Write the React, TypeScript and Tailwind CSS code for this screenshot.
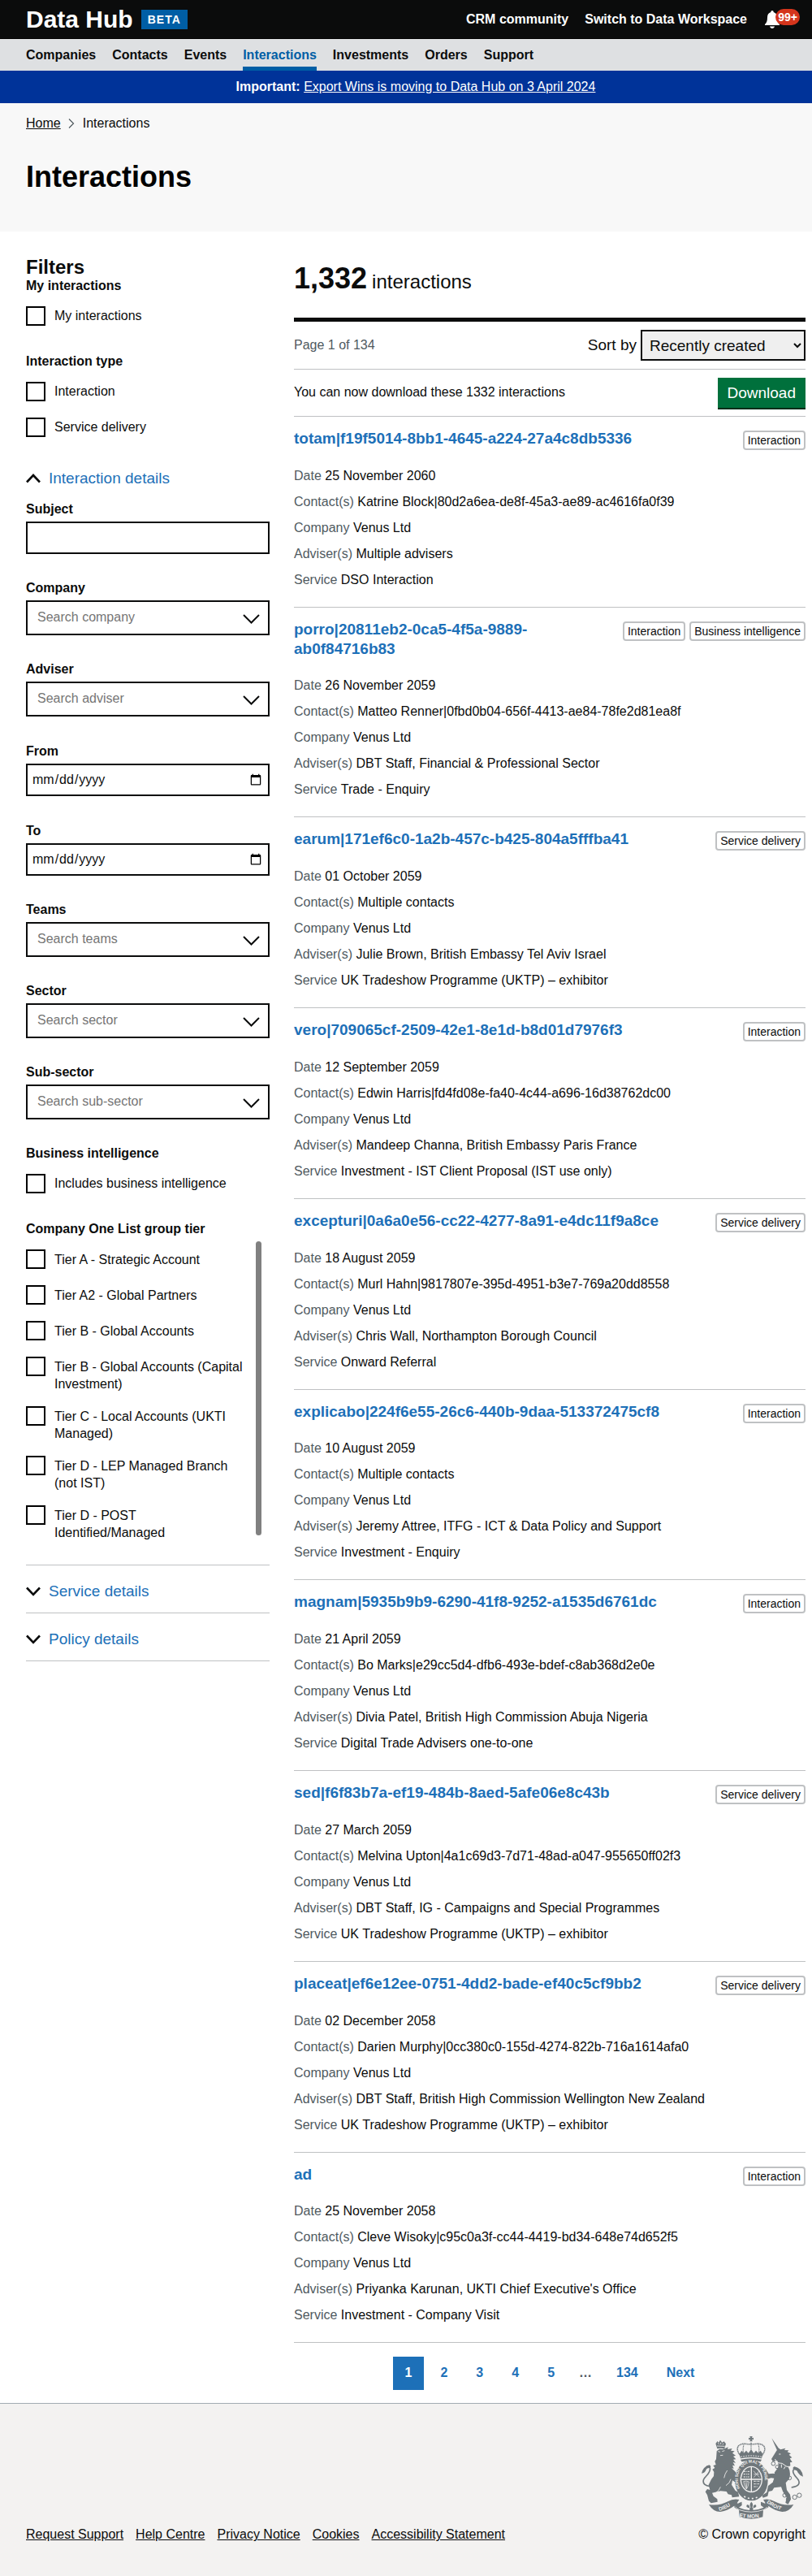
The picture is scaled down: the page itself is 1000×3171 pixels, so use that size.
import React from 'react';

const NAV = ['Companies', 'Contacts', 'Events', 'Interactions', 'Investments', 'Orders', 'Support'];

const TIERS = [
  'Tier A - Strategic Account',
  'Tier A2 - Global Partners',
  'Tier B - Global Accounts',
  'Tier B - Global Accounts (Capital Investment)',
  'Tier C - Local Accounts (UKTI Managed)',
  'Tier D - LEP Managed Branch (not IST)',
  'Tier D - POST Identified/Managed',
];

type Item = { title: string; tags: string[]; date: string; contact: string; adviser: string; service: string };

const ITEMS: Item[] = [
  {
    title: 'totam|f19f5014-8bb1-4645-a224-27a4c8db5336',
    tags: ['Interaction'],
    date: '25 November 2060',
    contact: 'Katrine Block|80d2a6ea-de8f-45a3-ae89-ac4616fa0f39',
    adviser: 'Multiple advisers',
    service: 'DSO Interaction',
  },
  {
    title: 'porro|20811eb2-0ca5-4f5a-9889-ab0f84716b83',
    tags: ['Interaction', 'Business intelligence'],
    date: '26 November 2059',
    contact: 'Matteo Renner|0fbd0b04-656f-4413-ae84-78fe2d81ea8f',
    adviser: 'DBT Staff, Financial & Professional Sector',
    service: 'Trade - Enquiry',
  },
  {
    title: 'earum|171ef6c0-1a2b-457c-b425-804a5fffba41',
    tags: ['Service delivery'],
    date: '01 October 2059',
    contact: 'Multiple contacts',
    adviser: 'Julie Brown, British Embassy Tel Aviv Israel',
    service: 'UK Tradeshow Programme (UKTP) – exhibitor',
  },
  {
    title: 'vero|709065cf-2509-42e1-8e1d-b8d01d7976f3',
    tags: ['Interaction'],
    date: '12 September 2059',
    contact: 'Edwin Harris|fd4fd08e-fa40-4c44-a696-16d38762dc00',
    adviser: 'Mandeep Channa, British Embassy Paris France',
    service: 'Investment - IST Client Proposal (IST use only)',
  },
  {
    title: 'excepturi|0a6a0e56-cc22-4277-8a91-e4dc11f9a8ce',
    tags: ['Service delivery'],
    date: '18 August 2059',
    contact: 'Murl Hahn|9817807e-395d-4951-b3e7-769a20dd8558',
    adviser: 'Chris Wall, Northampton Borough Council',
    service: 'Onward Referral',
  },
  {
    title: 'explicabo|224f6e55-26c6-440b-9daa-513372475cf8',
    tags: ['Interaction'],
    date: '10 August 2059',
    contact: 'Multiple contacts',
    adviser: 'Jeremy Attree, ITFG - ICT & Data Policy and Support',
    service: 'Investment - Enquiry',
  },
  {
    title: 'magnam|5935b9b9-6290-41f8-9252-a1535d6761dc',
    tags: ['Interaction'],
    date: '21 April 2059',
    contact: 'Bo Marks|e29cc5d4-dfb6-493e-bdef-c8ab368d2e0e',
    adviser: 'Divia Patel, British High Commission Abuja Nigeria',
    service: 'Digital Trade Advisers one-to-one',
  },
  {
    title: 'sed|f6f83b7a-ef19-484b-8aed-5afe06e8c43b',
    tags: ['Service delivery'],
    date: '27 March 2059',
    contact: 'Melvina Upton|4a1c69d3-7d71-48ad-a047-955650ff02f3',
    adviser: 'DBT Staff, IG - Campaigns and Special Programmes',
    service: 'UK Tradeshow Programme (UKTP) – exhibitor',
  },
  {
    title: 'placeat|ef6e12ee-0751-4dd2-bade-ef40c5cf9bb2',
    tags: ['Service delivery'],
    date: '02 December 2058',
    contact: 'Darien Murphy|0cc380c0-155d-4274-822b-716a1614afa0',
    adviser: 'DBT Staff, British High Commission Wellington New Zealand',
    service: 'UK Tradeshow Programme (UKTP) – exhibitor',
  },
  {
    title: 'ad',
    tags: ['Interaction'],
    date: '25 November 2058',
    contact: 'Cleve Wisoky|c95c0a3f-cc44-4419-bd34-648e74d652f5',
    adviser: "Priyanka Karunan, UKTI Chief Executive's Office",
    service: 'Investment - Company Visit',
  },
];

const FOOTER_LINKS = ['Request Support', 'Help Centre', 'Privacy Notice', 'Cookies', 'Accessibility Statement'];

function Chevron({ up = false }: { up?: boolean }) {
  return (
    <svg width="18" height="12" viewBox="0 0 18 12" fill="none" stroke="#0b0c0c" strokeWidth="2.6" aria-hidden="true">
      <path d={up ? 'M1 10.5 9 2l8 8.5' : 'M1 1.5 9 9.8l8-8.3'} />
    </svg>
  );
}

function Check({ label }: { label: string }) {
  return (
    <label className="flex items-center gap-[11px]">
      <input type="checkbox" className="size-6 shrink-0 appearance-none border-2 border-black bg-white" />
      {label}
    </label>
  );
}

function CheckGroup({ legend, options }: { legend: string; options: string[] }) {
  return (
    <fieldset>
      <legend className="mb-[15px] font-bold">{legend}</legend>
      <div className="flex flex-col gap-5">
        {options.map((o) => (
          <Check key={o} label={o} />
        ))}
      </div>
    </fieldset>
  );
}

function Typeahead({ label, placeholder }: { label: string; placeholder: string }) {
  const id = 'filter-' + label.toLowerCase();
  return (
    <div>
      <label htmlFor={id} className="mb-[5px] block font-bold">
        {label}
      </label>
      <div className="relative">
        <input
          id={id}
          type="text"
          placeholder={placeholder}
          className="block h-[43px] w-full border-2 border-[#0b0c0c] bg-white pr-10 pb-0.5 pl-3 placeholder:text-[#757575]"
        />
        <svg
          className="pointer-events-none absolute top-[17px] right-3 h-3 w-[21px]"
          viewBox="0 0 21 12"
          fill="none"
          stroke="#0b0c0c"
          strokeWidth="2"
          aria-hidden="true"
        >
          <path d="M1 1l9.5 9.5L20 1" />
        </svg>
      </div>
    </div>
  );
}

function DateField({ label }: { label: string }) {
  const id = 'filter-' + label.toLowerCase();
  return (
    <div className="pt-px">
      <label htmlFor={id} className="mb-[5px] block font-bold">
        {label}
      </label>
      <input id={id} type="date" className="block h-10 w-full border-2 border-[#0b0c0c] bg-white p-[5px]" />
    </div>
  );
}

function Toggle({ label }: { label: string }) {
  return (
    <div className="border-t border-[#bfc1c3] pt-[19px] pb-3.5">
      <button type="button" className="flex items-center gap-2.5 text-[19px] leading-[25px] text-[#1d70b8]">
        <Chevron />
        {label}
      </button>
    </div>
  );
}

function Filters() {
  return (
    <form className="w-[300px] shrink-0 pt-[30px]">
      <h2 className="text-2xl leading-[27px] font-bold">Filters</h2>
      <div className="flex flex-col gap-[34px]">
        <CheckGroup legend="My interactions" options={['My interactions']} />
        <CheckGroup legend="Interaction type" options={['Interaction', 'Service delivery']} />
      </div>
      <button
        type="button"
        className="mt-[38px] mb-4 flex items-center gap-2.5 text-[19px] leading-[25px] text-[#1d70b8]"
      >
        <Chevron up />
        Interaction details
      </button>
      <div className="flex flex-col gap-8">
        <div>
          <label htmlFor="filter-subject" className="mb-[5px] block font-bold">
            Subject
          </label>
          <input
            id="filter-subject"
            type="text"
            className="block h-10 w-full border-2 border-[#0b0c0c] bg-white px-[5px]"
          />
        </div>
        <Typeahead label="Company" placeholder="Search company" />
        <Typeahead label="Adviser" placeholder="Search adviser" />
        <DateField label="From" />
        <DateField label="To" />
        <Typeahead label="Teams" placeholder="Search teams" />
        <Typeahead label="Sector" placeholder="Search sector" />
        <Typeahead label="Sub-sector" placeholder="Search sub-sector" />
        <CheckGroup legend="Business intelligence" options={['Includes business intelligence']} />
      </div>
      <fieldset className="mt-[34px]">
        <legend className="mb-[5px] font-bold">Company One List group tier</legend>
        <div className="mb-7 flex h-[370px] overflow-hidden pr-2.5">
          <ul className="flex-1 pt-2.5">
            {TIERS.map((t) => (
              <li key={t} className="min-h-11 pr-[15px] pb-[17px]">
                <label className="flex items-start gap-[11px]">
                  <input type="checkbox" className="size-6 shrink-0 appearance-none border-2 border-black bg-white" />
                  <span className="pt-0.5 leading-[21px]">{t}</span>
                </label>
              </li>
            ))}
          </ul>
          <div className="h-[362px] w-[7px] rounded-full bg-[#808080]" aria-hidden="true" />
        </div>
      </fieldset>
      <div className="border-b border-[#bfc1c3]">
        <Toggle label="Service details" />
        <Toggle label="Policy details" />
      </div>
    </form>
  );
}

function Row({ name, value }: { name: string; value: string }) {
  return (
    <div>
      <dt className="inline text-[#505a5f]">{name}</dt> <dd className="inline">{value}</dd>
    </div>
  );
}

function InteractionItem({ item }: { item: Item }) {
  return (
    <li className="border-t border-[#bfc1c3] pt-[15px] pb-[23px]">
      <div className="mb-6 flex items-start justify-between">
        <h3 className="text-[19px] leading-tight font-bold">
          <a href="#" className="text-[#1d70b8]">
            {item.title}
          </a>
        </h3>
        <div className="mt-0.5 -mb-1 flex shrink-0 gap-[5px] pl-4">
          {item.tags.map((t) => (
            <span
              key={t}
              className="rounded-sm border-2 border-[#bfc1c3] px-1 text-sm leading-5 whitespace-nowrap"
            >
              {t}
            </span>
          ))}
        </div>
      </div>
      <dl className="flex flex-col gap-3">
        <Row name="Date" value={item.date} />
        <Row name="Contact(s)" value={item.contact} />
        <Row name="Company" value="Venus Ltd" />
        <Row name="Adviser(s)" value={item.adviser} />
        <Row name="Service" value={item.service} />
      </dl>
    </li>
  );
}

function Pagination() {
  return (
    <nav aria-label="Pagination" className="mt-[17px] mb-4 flex justify-center gap-[5px] font-bold text-[#1d70b8]">
      <a href="#" aria-current="page" className="bg-[#1d70b8] px-[15px] pt-2.5 pb-[11px] text-white">
        1
      </a>
      {['2', '3', '4', '5'].map((p) => (
        <a key={p} href="#" className="px-[15px] pt-2.5 pb-[11px]">
          {p}
        </a>
      ))}
      <span className="px-2.5 pt-2.5 pb-[11px] text-[#505a5f]">…</span>
      <a href="#" className="px-[15px] pt-2.5 pb-[11px]">
        134
      </a>
      <a href="#" className="px-[15px] pt-2.5 pb-[11px]">
        Next
      </a>
    </nav>
  );
}

function Results() {
  return (
    <section className="min-w-0 flex-1 pt-[38px]">
      <h2 className="mb-6 flex items-baseline gap-1.5 text-2xl leading-10">
        <span className="text-4xl leading-10 font-bold">1,332</span>
        interactions
      </h2>
      <div className="flex items-center justify-between border-t-5 border-[#0b0c0c] py-2.5">
        <p className="text-[#505a5f]">Page 1 of 134</p>
        <div className="flex items-center gap-[5px] text-[19px]">
          <label htmlFor="sort">Sort by</label>
          <select id="sort" className="h-[38px] w-[203px] border-2 border-[#0b0c0c] bg-[#efefef] px-[5px]">
            <option>Recently created</option>
          </select>
        </div>
      </div>
      <div className="flex items-start justify-between border-t border-[#bfc1c3] pt-2.5 pb-2">
        <p className="pt-2">You can now download these 1332 interactions</p>
        <button
          type="button"
          className="h-[39px] border-b-2 border-[#002d18] bg-[#00703c] px-3 text-[19px] text-white"
        >
          Download
        </button>
      </div>
      <ul className="border-b border-[#bfc1c3]">
        {ITEMS.map((i) => (
          <InteractionItem key={i.title} item={i} />
        ))}
      </ul>
      <Pagination />
    </section>
  );
}

function Crest() {
  return (
    <svg width="125" height="102" viewBox="72 57 375 306" role="img" aria-label="Royal coat of arms" fill="#6f777b">
      {/* lion */}
      <path d="M124 84l7-9 4 6 6-10 7 9 7-4 7 9-6 19q-13-5-26-1z" />
      <path d="M129 93l29 1M133 82l4 5M143 80v7M153 83l-3 5" stroke="#f3f2f1" strokeWidth="2.5" fill="none" />
      <path d="M128 112l10-8 14 1 18-8-2 8 17-3-5 8 14 2-8 7 12 9-9 3 10 11-10 1 9 12-10-2 7 13-9-2 5 12-8-1 18 17-5 14 8 12-7 9-11-7-3 16 14 22 10 5 4 17-26 3-2-9-13-3-6-10-22-2-31 7 5 12 14 11 1 10-24 5-8-8-6-22-7-12 7-10 10 3-5-19 10-20 9-12 1-15-6-10 9-5-6-9 10-3-4-12 5-9z" />
      <path d="M133 113l8 2M148 113l9-3M141 128l10-1M167 183q-9 12-12 28M122 268q16-10 20-24M180 215q-2 14-18 24" stroke="#f3f2f1" strokeWidth="2.5" fill="none" />
      <path d="M104 242c-18-2-30-10-24-26 7-14 27-24 23-42-2-8-9-8-13-3" fill="none" stroke="#6f777b" strokeWidth="5" />
      <path d="M72 194q6-25 28-31 9 4 4 11-13-2-16 8-4 10-16 12z" />
      {/* unicorn */}
      <path d="M331 64l28 40-8 5z" />
      <path d="M349 110l8-9 7 5 18-5-4 7 16 1-5 6 13 6-7 4 11 11-8 3 9 13-8 2 1 12-8 4q12 22 3 45l-12 14 4 27 12 16 3 17-10 19-10-5 4-20-14-23-6-16-26 3-7 11-13 3-4 17-17 6-4-8 18-12 5-24 17-13 5-15-11-1-18 5 0-13-13-9-8 10-9-3 6-9-12-10 6-10 14 8 14-2 11 18 19-2 18-25-5-22-17 3-5-9z" />
      <path d="M343 141l10 14 16 2 18 12 10 0M350 152l-6 14M367 161v12M381 169l-5 9M358 123h6M329 189l13 5" stroke="#f3f2f1" strokeWidth="3" fill="none" />
      <g fill="none" stroke="#6f777b" strokeWidth="3">
        <circle cx="337" cy="158" r="7" />
        <circle cx="351" cy="170" r="6" />
        <circle cx="397" cy="211" r="7" />
        <circle cx="379" cy="275" r="7" />
        <circle cx="392" cy="290" r="7" />
        <circle cx="416" cy="282" r="8" />
        <circle cx="433" cy="275" r="8" />
      </g>
      <path d="M404 246c24-4 33-12 26-27-7-12-21-20-20-34 1-7 7-9 13-5" fill="none" stroke="#6f777b" strokeWidth="5" />
      <path d="M447 206q-4-32-32-37-9 4-3 11 12 0 16 11 5 9 19 15z" />
      {/* central crown */}
      <path d="M250 57h10l-2 7 6-2v8l-6-2 2 8h-10l2-8-6 2v-8l6 2z" />
      <g fill="none" stroke="#6f777b">
        <path d="M216 129c-20-24-12-42 10-44 12-1 24 4 29 0 5 4 17-1 29 0 22 2 30 20 10 44" strokeWidth="4.5" strokeDasharray="4 1.5" />
        <path d="M255 80v44M228 88q-5 18 0 36M282 88q5 18 0 36" strokeWidth="3.5" strokeDasharray="3 1.5" />
      </g>
      <path d="M212 122l8-12 8 9 9-9 8 9 10-13 10 13 8-9 9 9 8-9 8 12-4 17q-39-8-78 0z" />
      <path d="M217 133q38-8 76 0" stroke="#f3f2f1" strokeWidth="3" strokeDasharray="5 4" fill="none" />
      <path d="M216 143q39-9 78 0l-4 8q-35-7-70 0z" />
      {/* garter and shield */}
      <ellipse cx="256" cy="220" rx="61" ry="75" />
      <ellipse cx="256" cy="216" rx="41" ry="49" fill="#f3f2f1" />
      <ellipse cx="256" cy="216" rx="37" ry="45" />
      <path d="M256 171v90M219 216h74" stroke="#f3f2f1" strokeWidth="4" />
      <path d="M228 187h21M227 197h21M227 207h21M265 223h21M265 233h20M265 243h15" stroke="#f3f2f1" strokeWidth="3" strokeDasharray="7 3 3 2" />
      <path d="M264 185l22 24M285 185l-20 24M265 197h20" stroke="#f3f2f1" strokeWidth="2" />
      <path d="M227 224q10-4 20 1-2 18-9 27-9-10-11-28zM233 226l5 24M240 225l-2 25" fill="none" stroke="#f3f2f1" strokeWidth="2" />
      <path id="garter" d="M214 249A50 61 0 1 1 298 249" fill="none" />
      <text fill="#f3f2f1" fontFamily="Liberation Sans, sans-serif" fontSize="15" fontWeight="bold">
        <textPath href="#garter">HONI SOIT QUI MAL Y PENSE</textPath>
      </text>
      <path d="M229 279q27 16 54 0" stroke="#f3f2f1" strokeWidth="5" strokeDasharray="6 9" fill="none" />
      {/* motto ribbon */}
      <path d="M99 309q38 6 70-11 20-12 42-7l-8 13 17 8-29 3q-21 16-50 21-26 0-42-27z" />
      <path d="M412 309q-38 6-70-11-20-12-42-7l8 13-17 8 29 3q21 16 50 21 26 0 42-27z" />
      <path d="M192 318q10-14 29-19l1 12-12 9q45 21 92 0l-12-9 1-12q19 5 29 19-12 9-20 11l-2 26q-42 14-86 0l-2-26q-10-2-18-11z" />
      <path d="M197 318q5 7 15 11 43 15 88 0 9-4 14-11" stroke="#f3f2f1" strokeWidth="2.5" fill="none" />
      <path d="M221 300q32 26 70 0v15q-34 16-70 0z" fill="#f3f2f1" />
      <path d="M256 299q9 9 3 21l4 1q-1-12 9-11 6 8-4 11-5 0-7 3l4 9h-18l4-9q-2-3-7-3-10-3-4-11 10-1 9 11l4-1q-6-12 3-21z" />
      <path id="motto-left" d="M138 333Q168 324 198 300" fill="none" />
      <path id="motto-mid" d="M211 354Q255 364 302 353" fill="none" />
      <path id="motto-right" d="M312 302Q340 324 382 336" fill="none" />
      <g fill="#f3f2f1" fontFamily="Liberation Sans, sans-serif" fontSize="19" fontWeight="bold">
        <text>
          <textPath href="#motto-left">DIEU</textPath>
        </text>
        <text>
          <textPath href="#motto-mid">ET MON</textPath>
        </text>
        <text>
          <textPath href="#motto-right">DROIT</textPath>
        </text>
      </g>
    </svg>
  );
}

export default function App() {
  return (
    <div className="bg-white font-['Liberation_Sans',Arial,sans-serif] text-base leading-5 text-[#0b0c0c]">
      <header>
        <div className="flex h-12 items-center justify-between bg-[#0b0c0c] pr-[15px] pl-8 font-bold text-white shadow-[inset_0_-1px_0_#000]">
          <div className="flex items-center gap-2.5">
            <a href="#" className="text-3xl leading-[30px]">
              Data Hub
            </a>
            <strong className="bg-[#005ea5] px-2 py-0.5 text-sm leading-5 tracking-[1px]">BETA</strong>
          </div>
          <div className="flex items-center gap-5">
            <a href="#">CRM community</a>
            <a href="#">Switch to Data Workspace</a>
            <a href="#" aria-label="Notifications" className="relative block h-6 w-[45px]">
              <svg width="22" height="24" viewBox="0 0 22 24" fill="#fff" aria-hidden="true">
                <path d="M11 1c1.200 0 1.700 1 1.700 1.900 3 .8 4.300 3.300 4.300 6.600 0 4.500 1 6.500 3 8.500v.9H2v-.9c2-2 3-4 3-8.500 0-3.300 1.300-5.800 4.300-6.600C9.300 2 9.800 1 11 1zM8 20.500h6c-.4 1.600-1.500 2.500-3 2.500s-2.600-.9-3-2.500z" />
              </svg>
              <span className="absolute -top-px right-0 h-5 w-[30px] rounded-full bg-[#d4351c] text-center text-sm leading-5">
                99+
              </span>
            </a>
          </div>
        </div>
        <nav aria-label="Main" className="flex h-[39px] gap-5 bg-[#dee0e2] pl-8 font-bold">
          {NAV.map((n) => (
            <a
              key={n}
              href="#"
              className={
                n === 'Interactions'
                  ? 'flex items-center text-[#005ea5] shadow-[inset_0_-5px_0_#005ea5]'
                  : 'flex items-center'
              }
            >
              {n}
            </a>
          ))}
        </nav>
        <p className="bg-[#003399] py-2.5 pl-6 text-center text-white">
          <strong>Important:</strong>{' '}
          <a href="#" className="underline">
            Export Wins is moving to Data Hub on 3 April 2024
          </a>
        </p>
      </header>
      <div className="bg-[#f8f8f8] pt-[15px] pr-2 pb-[47px] pl-8">
        <nav aria-label="Breadcrumb" className="flex items-center">
          <a href="#" className="underline">
            Home
          </a>
          <svg className="mr-2.5 ml-[9px]" width="8" height="12" viewBox="0 0 8 12" fill="none" stroke="#505a5f" aria-hidden="true">
            <path d="M1 .5 6.500 6 1 11.500" strokeWidth="1.200" />
          </svg>
          <span>Interactions</span>
        </nav>
        <h1 className="mt-9 text-4xl leading-10 font-bold text-black">Interactions</h1>
      </div>
      <main className="flex gap-[30px] pr-2 pl-8">
        <Filters />
        <Results />
      </main>
      <footer className="flex items-end justify-between border-t border-[#a1acb2] bg-[#f3f2f1] pt-10 pr-2 pb-[41px] pl-8">
        <ul className="flex gap-[15px]">
          {FOOTER_LINKS.map((l) => (
            <li key={l}>
              <a href="#" className="underline">
                {l}
              </a>
            </li>
          ))}
        </ul>
        <div className="flex flex-col items-end gap-[9px]">
          <div className="pr-[3px]">
            <Crest />
          </div>
          <p>© Crown copyright</p>
        </div>
      </footer>
    </div>
  );
}
